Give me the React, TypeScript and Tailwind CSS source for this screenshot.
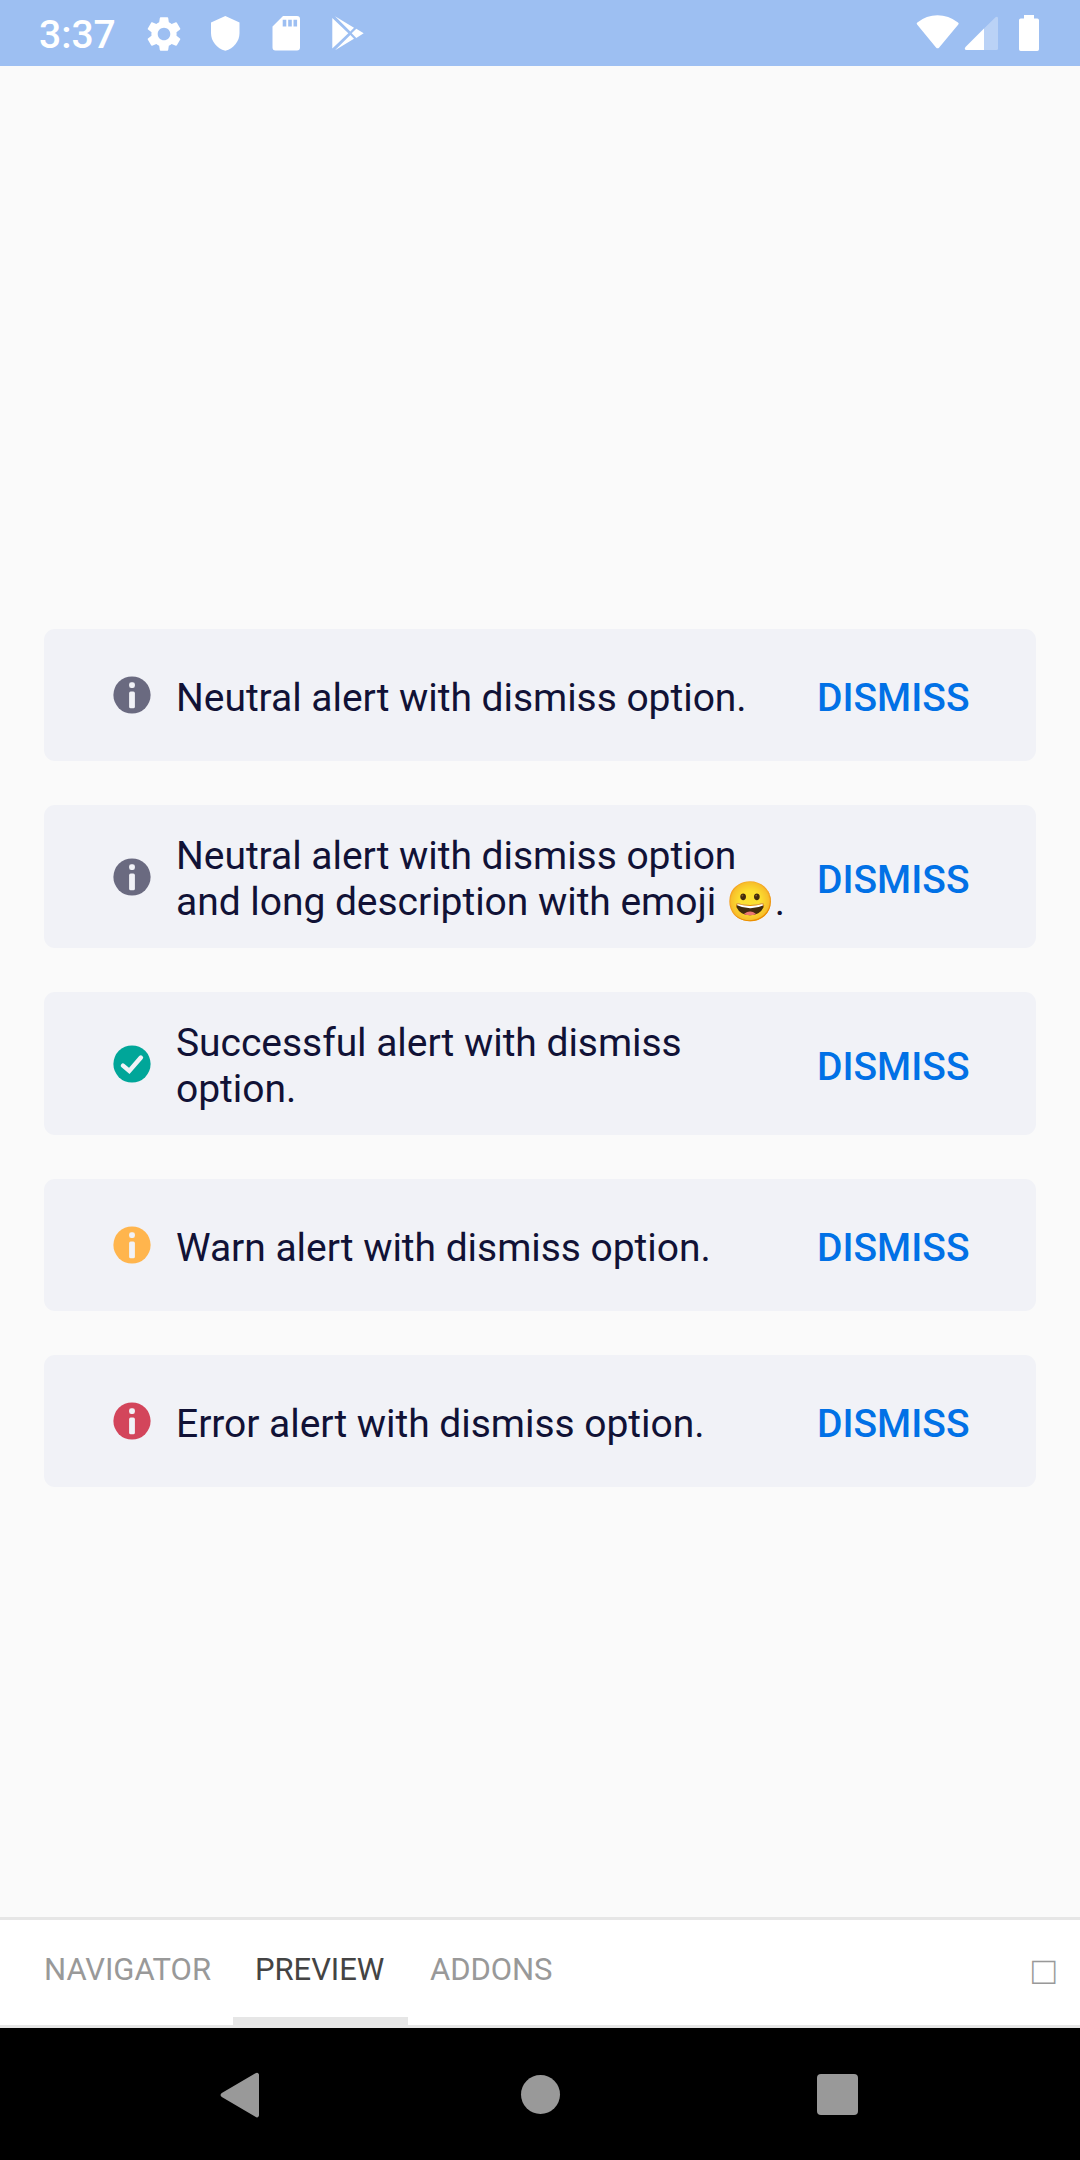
import { MdSettings } from "react-icons/md";

type Kind = "neutral" | "success" | "warn" | "error";

const iconColor: Record<Kind, string> = {
  neutral: "text-[#6a6a80]",
  success: "text-[#00a699]",
  warn: "text-[#ffb54d]",
  error: "text-[#d3455b]",
};

const alerts: { kind: Kind; text: string; tall?: boolean }[] = [
  { kind: "neutral", text: "Neutral alert with dismiss option." },
  {
    kind: "neutral",
    text: "Neutral alert with dismiss option and long description with emoji 😀.",
    tall: true,
  },
  { kind: "success", text: "Successful alert with dismiss option.", tall: true },
  { kind: "warn", text: "Warn alert with dismiss option." },
  { kind: "error", text: "Error alert with dismiss option." },
];

function AlertIcon({ kind }: { kind: Kind }) {
  return (
    <svg viewBox="0 0 44 44" className={`size-11 shrink-0 ${iconColor[kind]}`}>
      <circle cx="22" cy="22" r="18.6" fill="currentColor" />
      {kind === "success" ? (
        <path
          d="M13 23.6 19.3 28.9 30.9 15.6"
          fill="none"
          stroke="#f1f2f7"
          strokeWidth="4.5"
          strokeLinecap="round"
        />
      ) : (
        <g fill="#f1f2f7">
          <rect x="19.1" y="9.2" width="5.8" height="5.8" rx="2.2" />
          <rect x="19.1" y="18.6" width="5.8" height="16.7" rx="1.6" />
        </g>
      )}
    </svg>
  );
}

function Alert({ kind, text, tall }: { kind: Kind; text: string; tall?: boolean }) {
  return (
    <div
      className={`flex items-center rounded-[11px] bg-[#f1f2f7] px-[66px] ${
        tall ? "h-[143px]" : "h-[132px]"
      }`}
    >
      <AlertIcon kind={kind} />
      <p
        className={`ml-[22px] flex-1 text-[39px] leading-[46px] tracking-[-0.04px] text-[#111236] ${
          tall ? "pt-[5px]" : "pt-[6px]"
        }`}
      >
        {text}
      </p>
      <button className="ml-[21px] mr-[0.5px] shrink-0 pt-[6px] text-[39px] leading-[46px] font-medium text-[#0171e6]">
        DISMISS
      </button>
    </div>
  );
}

function StatusBar() {
  return (
    <header className="flex h-[66px] items-center bg-[#9dbff2] text-white">
      <span className="ml-[39px] w-[77px] pt-[3px] text-[39px] leading-[46px] font-medium">3:37</span>
      <MdSettings className="ml-[27px] mt-[1px] size-[42px]" />
      <svg viewBox="0 0 30 36" className="ml-[25px] h-9 w-[30px]" fill="currentColor">
        <path d="M15.3 1 29.5 7.4V18c0 8.2-5.6 15.5-14.2 17.7C6.7 33.5 1 26.2 1 18V7.4Z" />
      </svg>
      <svg viewBox="0 0 30 36" className="ml-[31px] h-9 w-[30px]" fill="currentColor" fillRule="evenodd">
        <path d="M12 1h14a3 3 0 0 1 3 3v28.500a3 3 0 0 1-3 3H4.500a3 3 0 0 1-3-3V11.500ZM11.700 4.800v6.700h3.600V4.800ZM17.200 4.800v6.700h3.600V4.800ZM22.500 4.800v6.700h3.600V4.800Z" />
      </svg>
      <svg viewBox="0 0 34 36" className="ml-[30px] h-9 w-[34px]" fill="currentColor">
        <path d="M1.300 3 17.300 18.300 1.300 33.600ZM4 1.300 23 12.800 19.300 16.500ZM4 35.300 23 23.800 19.300 20.100ZM25.300 13.800 32.700 18.300 25.300 23 20.700 18.300Z" />
      </svg>
      <svg viewBox="0 0 126 40" className="ml-auto mr-[39px] h-10 w-[126px]" fill="currentColor">
        <path d="M2.300 9.400Q11.500 2.200 22.500 2.200T43 9.400Q44.300 10.400 43.300 11.600L24.200 34.400Q22.600 36.300 21 34.400L2.100 11.600Q1.100 10.400 2.300 9.400Z" />
        <path d="M69 15.400V37H51.400Q48.700 36.700 50.500 34Z" />
        <path d="M69 15.400 80.500 4.200Q82.700 3 83 5.200V35.500Q83 37 81.500 37H69Z" fillOpacity=".3" />
        <path d="M109 2h10v3.500h3.300q1.700 0 1.700 1.700v29.100q0 1.700-1.700 1.700h-16.600q-1.700 0-1.700-1.700V7.200q0-1.700 1.700-1.700h3.300Z" />
      </svg>
    </header>
  );
}

function TabBar() {
  const base = "h-full pt-[31px] text-center text-[31px] leading-[37px] tracking-[-0.05px]";
  return (
    <nav className="flex h-[111px] border-y-[3px] border-[#e6e6e6] bg-white text-[#999]">
      <button className={`${base} ml-[22px] flex w-[211px] justify-center`}>NAVIGATOR</button>
      <button className={`${base} flex w-[175px] border-b-8 border-[#e6e6e6] pl-[22px] text-[#444]`}>
        PREVIEW
      </button>
      <button className={`${base} flex px-[22px]`}>ADDONS</button>
      <button className="ml-auto mr-6 flex h-[74px] w-6 items-end text-[39px] leading-[46px]">□</button>
    </nav>
  );
}

function SystemNav() {
  return (
    <footer className="flex h-[132px] items-center bg-black text-[#999]">
      <svg viewBox="0 0 44 48" className="ml-[218px] mt-[1px] h-12 w-11" fill="currentColor">
        <path d="M37 2.500Q40 .500 41 3.500V44.500Q40 48 37 45.500L3.800 26Q1.300 24 3.800 22Z" />
      </svg>
      <span className="ml-[259px] mt-[1px] size-[39px] rounded-full bg-[#999]" />
      <span className="ml-[257px] mt-[1px] size-[41px] rounded-[4px] bg-[#999]" />
    </footer>
  );
}

export default function App() {
  return (
    <div className="flex h-[2160px] w-[1080px] flex-col bg-[#fafafa] font-[Roboto,sans-serif]">
      <StatusBar />
      <main className="flex flex-1 flex-col gap-11 px-11 pt-[563px]">
        {alerts.map((a, i) => (
          <Alert key={i} {...a} />
        ))}
      </main>
      <TabBar />
      <SystemNav />
    </div>
  );
}
